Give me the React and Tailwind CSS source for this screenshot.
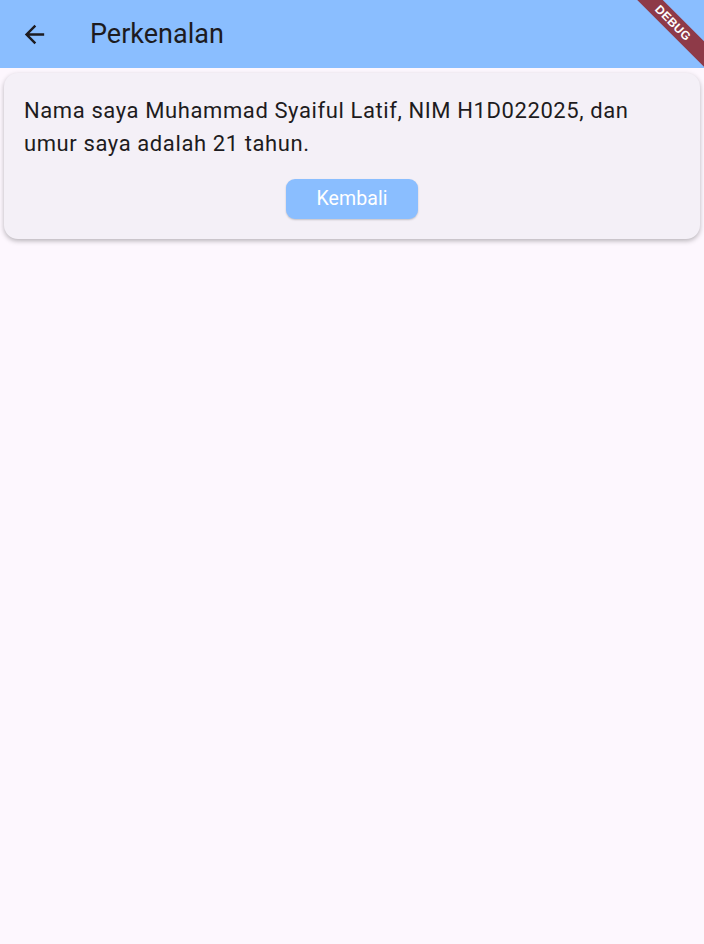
export default function App() {
    return (
        <div className="relative w-[704px] h-[944px] overflow-hidden bg-[#fdf7fe] font-['Roboto',sans-serif]">
            {/* App bar */}
            <header className="h-[68px] bg-[#8abeff] flex items-center pl-[20px]">
                <svg width="29" height="29" viewBox="0 0 24 24" className="text-[#1d1b20]">
                    <path fill="currentColor" d="M20 11H7.83l5.59-5.59L12 4l-8 8 8 8 1.41-1.41L7.83 13H20v-2z" />
                </svg>
                <h1 className="ml-[41px] text-[27px] text-[#1d1b20] leading-none">Perkenalan</h1>
            </header>

            {/* Card */}
            <div className="mx-[4px] mt-[5px] rounded-[14px] bg-[#f4f0f7] shadow-[0_2px_5px_rgba(0,0,0,0.28)] px-[20px] pt-[21px] pb-[20px]">
                <p className="text-[22px] leading-[33px] text-[#1d1b20] tracking-[0.6px]">
                    Nama saya Muhammad Syaiful Latif, NIM H1D022025, dan umur saya adalah 21 tahun.
                </p>
                <div className="flex justify-center mt-[19px]">
                    <button className="w-[132px] h-[40px] rounded-[9px] bg-[#8abeff] text-white text-[19.5px] tracking-[0.1px] shadow-[0_1px_2px_rgba(0,0,0,0.2)]">
                        Kembali
                    </button>
                </div>
            </div>

            {/* Debug banner */}
            <div className="absolute top-[14px] right-[-28px] w-[118px] h-[18px] rotate-45 bg-[#8e3a48] flex items-center justify-center">
                <span className="text-white text-[12px] font-bold tracking-[0.3px] font-['Liberation_Sans',sans-serif]">DEBUG</span>
            </div>
        </div>
    );
}
